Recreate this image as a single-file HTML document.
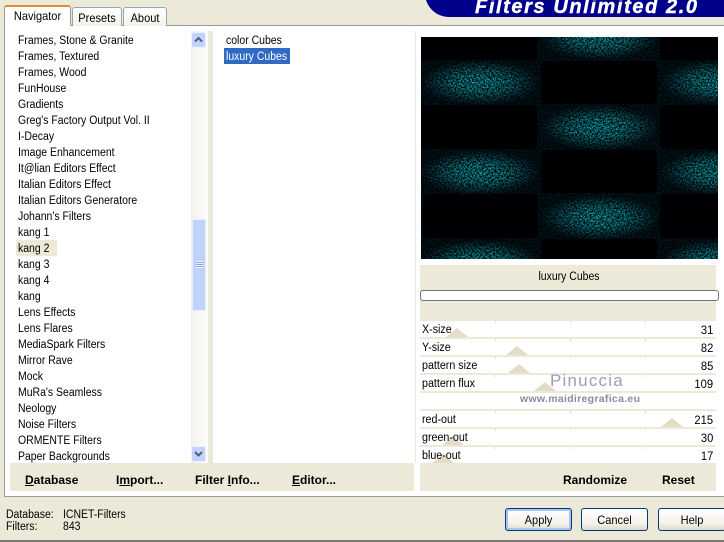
<!DOCTYPE html>
<html><head><meta charset="utf-8"><style>
html,body{margin:0;padding:0}
body{width:724px;height:542px;overflow:hidden;background:#ece9d8;position:relative;font:11.5px/16px "Liberation Sans",sans-serif;color:#000}
div,span{position:absolute;white-space:nowrap}
.it,.n{transform:scaleX(.91);transform-origin:left center}
.it{left:18px}
.b{font-weight:bold;font-size:12px}
u{text-decoration:underline}
.row{left:420px;width:296px;height:16px;background:#fff}
.tk{width:1px;height:2px;background:#ddd;top:0}
.tri{width:0;height:0;border-left:11px solid transparent;border-right:11px solid transparent;border-bottom:9px solid #e2dcc8}
.l{left:2px;top:1px;transform:scaleX(.93);transform-origin:left center}.v{right:3px;top:1px;font-size:12px;transform:scaleX(.93);transform-origin:right center}
.btn{height:21px;border:1px solid #003c74;border-radius:3px;background:linear-gradient(#fff,#f3f2ea 70%,#dcd8c8)}
.btn span{left:0;right:0;top:0;text-align:center;line-height:22px;font-size:12px;transform:scaleX(.92)}
.tab{background:linear-gradient(#fff,#f3f2e9);border:1px solid #91a7b4;border-bottom:none;border-radius:3px 3px 0 0;text-align:center;font-size:12px}
.tab span{left:0;right:0;top:2px;transform:scaleX(.92)}
</style></head><body>
<div style="left:425px;top:-14px;width:320px;height:31px;background:#00008a;border-radius:0 0 0 24px"></div>
<div style="left:475px;top:-4px;color:#fff;font:italic bold 20px/22px 'Liberation Sans',sans-serif;letter-spacing:1.6px;-webkit-text-stroke:.4px #fff">Filters Unlimited 2.0</div>

<div style="left:4px;top:25px;width:720px;height:472px;background:#fff;border-top:1px solid #919b9c;border-left:1px solid #919b9c;border-bottom:1px solid #919b9c;box-sizing:border-box"></div>

<div class="tab" style="left:72px;top:7px;width:48px;height:18px"><span>Presets</span></div>
<div class="tab" style="left:123px;top:7px;width:42px;height:18px"><span>About</span></div>
<div style="left:4px;top:5px;width:67px;height:21px;background:#fff;border:1px solid #919b9c;border-bottom:none;border-top:2px solid #e68b2c;border-radius:3px 3px 0 0;box-sizing:border-box;font-size:12px"><span style="left:0;right:0;top:1px;text-align:center;transform:scaleX(.92)">Navigator</span></div>

<div style="left:16px;top:240px;width:41px;height:16px;background:#ece9d8"></div>
<div class="it" style="top:33px">Frames, Stone &amp; Granite</div>
<div class="it" style="top:49px">Frames, Textured</div>
<div class="it" style="top:65px">Frames, Wood</div>
<div class="it" style="top:81px">FunHouse</div>
<div class="it" style="top:97px">Gradients</div>
<div class="it" style="top:113px">Greg's Factory Output Vol. II</div>
<div class="it" style="top:129px">I-Decay</div>
<div class="it" style="top:145px">Image Enhancement</div>
<div class="it" style="top:161px">It@lian Editors Effect</div>
<div class="it" style="top:177px">Italian Editors Effect</div>
<div class="it" style="top:193px">Italian Editors Generatore</div>
<div class="it" style="top:209px">Johann's Filters</div>
<div class="it" style="top:225px">kang 1</div>
<div class="it" style="top:241px">kang 2</div>
<div class="it" style="top:257px">kang 3</div>
<div class="it" style="top:273px">kang 4</div>
<div class="it" style="top:289px">kang</div>
<div class="it" style="top:305px">Lens Effects</div>
<div class="it" style="top:321px">Lens Flares</div>
<div class="it" style="top:337px">MediaSpark Filters</div>
<div class="it" style="top:353px">Mirror Rave</div>
<div class="it" style="top:369px">Mock</div>
<div class="it" style="top:385px">MuRa's Seamless</div>
<div class="it" style="top:401px">Neology</div>
<div class="it" style="top:417px">Noise Filters</div>
<div class="it" style="top:433px">ORMENTE Filters</div>
<div class="it" style="top:449px">Paper Backgrounds</div>

<div style="left:191px;top:31px;width:17px;height:432px;background:linear-gradient(90deg,#f3f1ec,#fdfdfb)"></div>
<div style="left:208px;top:31px;width:5px;height:432px;background:#ece9d8"></div>
<div style="left:191px;top:32px;width:15px;height:16px;background:#c3d3fb;border:1px solid #eef3ff;box-sizing:border-box;border-radius:2px"></div>
<svg style="position:absolute;left:191px;top:32px" width="15" height="16"><path d="M4 9.5L7.5 6L11 9.5" fill="none" stroke="#4d6185" stroke-width="2"/></svg>
<div style="left:191px;top:446px;width:15px;height:16px;background:#c3d3fb;border:1px solid #eef3ff;box-sizing:border-box;border-radius:2px"></div>
<svg style="position:absolute;left:191px;top:446px" width="15" height="16"><path d="M4 6L7.5 9.5L11 6" fill="none" stroke="#4d6185" stroke-width="2"/></svg>
<div style="left:192px;top:219px;width:14px;height:92px;background:#c1d2fb;border:1px solid #e6edff;box-sizing:border-box;border-radius:2px"></div>
<div style="left:196px;top:261px;width:7px;height:7px;background:repeating-linear-gradient(#eef3ff 0 1px,#8ca8e6 1px 2px)"></div>

<div class="n" style="left:226px;top:33px">color Cubes</div>
<div style="left:224px;top:48px;width:66px;height:16px;background:#316ac5"></div>
<div class="n" style="left:226px;top:49px;color:#fff">luxury Cubes</div>

<div style="left:415px;top:31px;width:1px;height:432px;background:#ece9d8"></div>
<svg style="position:absolute;left:421px;top:37px" width="297" height="222" viewBox="421 37 297 222">
<defs>
<radialGradient id="g"><stop offset="0" stop-color="#0cb4c0"/><stop offset=".45" stop-color="#088c99"/><stop offset=".8" stop-color="#033e4a"/><stop offset="1" stop-color="#011821"/></radialGradient>
<filter id="n" x="0" y="0" width="100%" height="100%" color-interpolation-filters="sRGB"><feTurbulence type="fractalNoise" baseFrequency=".62" numOctaves="2" seed="7"/><feColorMatrix values="0 0 0 0 0  0 0 0 0 0  0 0 0 0 0  2.6 0 0 0 -.75"/></filter>
</defs>
<rect x="421" y="37" width="297" height="222" fill="#011a22"/>
<g fill="url(#g)">
<rect x="420" y="60" width="120" height="45"/><rect x="660" y="60" width="120" height="45"/>
<rect x="540" y="15" width="120" height="45"/>
<rect x="540" y="105" width="120" height="45"/>
<rect x="420" y="150" width="120" height="45"/><rect x="660" y="150" width="120" height="45"/>
<rect x="540" y="195" width="120" height="45"/>
<rect x="420" y="240" width="120" height="45"/><rect x="660" y="240" width="120" height="45"/>
</g>
<g fill="#000004">
<rect x="421" y="20" width="116" height="40" rx="4"/><rect x="660" y="20" width="116" height="40" rx="4"/>
<rect x="541" y="61" width="116" height="43" rx="4"/>
<rect x="421" y="105" width="116" height="44" rx="4"/><rect x="660" y="105" width="116" height="44" rx="4"/>
<rect x="541" y="150" width="116" height="43" rx="4"/>
<rect x="423" y="194" width="115" height="44" rx="4"/><rect x="660" y="194" width="116" height="44" rx="4"/>
<rect x="541" y="239" width="116" height="43" rx="4"/>
</g>
<rect x="421" y="37" width="297" height="222" filter="url(#n)"/>
</svg>

<div style="left:420px;top:265px;width:296px;height:56px;background:#ece9d8"></div>
<div style="left:420px;top:269px;width:298px;text-align:center;transform:scaleX(.91)">luxury Cubes</div>
<div style="left:420px;top:290px;width:299px;height:11px;background:#fff;border:1px solid #6f7478;box-sizing:border-box;border-radius:3px"></div>

<div style="left:420px;top:321px;width:296px;height:142px;background:#ece9d8"></div>

<div class="row" style="top:321px"><div class="tk" style="left:75px"></div><div class="tk" style="left:150px"></div><div class="tk" style="left:225px"></div><div class="tri" style="left:26px;top:7px"></div><div class="l">X-size</div><div class="v">31</div></div>
<div class="row" style="top:339px"><div class="tk" style="left:75px"></div><div class="tk" style="left:150px"></div><div class="tk" style="left:225px"></div><div class="tri" style="left:86px;top:7px"></div><div class="l">Y-size</div><div class="v">82</div></div>
<div class="row" style="top:357px"><div class="tk" style="left:75px"></div><div class="tk" style="left:150px"></div><div class="tk" style="left:225px"></div><div class="tri" style="left:88px;top:7px"></div><div class="l">pattern size</div><div class="v">85</div></div>
<div class="row" style="top:375px"><div class="tk" style="left:75px"></div><div class="tk" style="left:150px"></div><div class="tk" style="left:225px"></div><div class="tri" style="left:114px;top:7px"></div><div class="l">pattern flux</div><div class="v">109</div></div>
<div class="row" style="top:393px"></div>
<div class="row" style="top:411px"><div class="tk" style="left:75px"></div><div class="tk" style="left:150px"></div><div class="tk" style="left:225px"></div><div class="tri" style="left:241px;top:7px"></div><div class="l">red-out</div><div class="v">215</div></div>
<div class="row" style="top:429px"><div class="tk" style="left:75px"></div><div class="tk" style="left:150px"></div><div class="tk" style="left:225px"></div><div class="tri" style="left:22px;top:7px"></div><div class="l">green-out</div><div class="v">30</div></div>
<div class="row" style="top:447px"><div class="tk" style="left:75px"></div><div class="tk" style="left:150px"></div><div class="tk" style="left:225px"></div><div class="tri" style="left:12px;top:7px"></div><div class="l">blue-out</div><div class="v">17</div></div>

<div style="left:550px;top:371px;font:17px/20px 'Liberation Sans',sans-serif;color:#9aa0b4;letter-spacing:1.2px">Pinuccia</div>
<div style="left:520px;top:392px;font:bold 10.5px/14px 'Liberation Sans',sans-serif;color:#8a8c9c;letter-spacing:.3px">www.maidiregrafica.eu</div>

<div style="left:10px;top:463px;width:404px;height:28px;background:#ece9d8"></div>
<div style="left:420px;top:463px;width:296px;height:28px;background:#ece9d8"></div>
<div class="b" style="left:25px;top:472px"><u>D</u>atabase</div>
<div class="b" style="left:116px;top:472px">I<u>m</u>port...</div>
<div class="b" style="left:195px;top:472px">Filter <u>I</u>nfo...</div>
<div class="b" style="left:292px;top:472px"><u>E</u>ditor...</div>
<div class="b" style="left:563px;top:472px">Randomize</div>
<div class="b" style="left:662px;top:472px">Reset</div>

<div class="n" style="left:6px;top:507px">Database:</div>
<div class="n" style="left:63px;top:507px">ICNET-Filters</div>
<div class="n" style="left:6px;top:519px">Filters:</div>
<div class="n" style="left:63px;top:519px">843</div>

<div class="btn" style="left:505px;top:508px;width:65px;box-shadow:inset 0 0 0 2px #a9c4ec"><span>Apply</span></div>
<div class="btn" style="left:581px;top:508px;width:65px"><span>Cancel</span></div>
<div class="btn" style="left:658px;top:508px;width:66px"><span>Help</span></div>
<div style="left:0;top:540px;width:724px;height:2px;background:#77776f"></div>
</body></html>
